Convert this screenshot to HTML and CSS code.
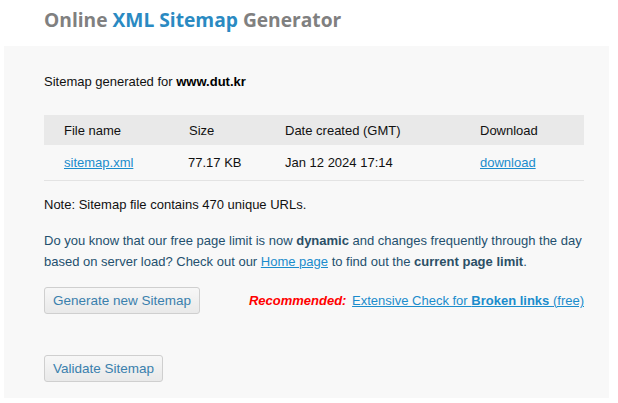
FILE: index.html
```html
<!DOCTYPE html>
<html lang="en">
<head>
    <meta charset="UTF-8">
    <title>Online XML Sitemap Generator</title>
    <link rel="stylesheet" href="styles.css">
</head>
<body>
    <h1 class="page-title">Online <span class="accent">XML Sitemap</span> Generator</h1>

    <div class="panel">
        <p class="generated">Sitemap generated for <strong>www.dut.kr</strong></p>

        <table class="files">
            <thead>
                <tr>
                    <th class="col-name">File name</th>
                    <th class="col-size">Size</th>
                    <th class="col-date">Date created (GMT)</th>
                    <th>Download</th>
                </tr>
            </thead>
            <tbody>
                <tr>
                    <td><a href="#">sitemap.xml</a></td>
                    <td>77.17 KB</td>
                    <td>Jan 12 2024 17:14</td>
                    <td><a href="#">download</a></td>
                </tr>
            </tbody>
        </table>

        <p class="note">Note: Sitemap file contains 470 unique URLs.</p>

        <p class="info">Do you know that our free page limit is now <strong>dynamic</strong> and changes frequently through the day based on server load? Check out our <a href="#">Home page</a> to find out the <strong>current page limit</strong>.</p>

        <div class="actions">
            <button class="btn">Generate new Sitemap</button>
            <div class="promo">
                <em>Recommended:</em>
                <a href="#">Extensive Check for <strong>Broken links </strong>(free)</a>
            </div>
        </div>

        <div class="actions validate">
            <button class="btn">Validate Sitemap</button>
        </div>
    </div>
</body>
</html>
```

FILE: styles.css
```css
* {
    margin: 0;
    padding: 0;
    box-sizing: border-box;
}

body {
    font-family: 'Liberation Sans', Arial, sans-serif;
    font-size: 13px;
    color: #111;
    background: #fff;
}

a {
    color: #1b8ccc;
}

.page-title {
    font-family: 'Open Sans', sans-serif;
    font-size: 19.2px;
    font-weight: 700;
    color: #808080;
    line-height: 28px;
    padding: 6px 0 0 44px;
    height: 46px;
}

.page-title .accent {
    color: #2a8ac2;
}

.panel {
    background: #f8f8f8;
    margin: 0 9px 0 4px;
    padding: 27px 25px 16px 40px;
}

.generated {
    line-height: 18px;
}

.generated strong {
    color: #000;
}

.files {
    width: 100%;
    margin-top: 24px;
    border-collapse: collapse;
}

.files th {
    background: #e9e9e9;
    font-weight: normal;
    color: #111;
    text-align: left;
    height: 30px;
    padding: 0 0 0 20px;
}

.files td {
    height: 35px;
    padding: 0 0 0 20px;
    border-bottom: 1px solid #e3e3e3;
}

.files .col-name {
    width: 125px;
}

.files .col-size {
    width: 96px;
}

.files .col-date {
    width: 195px;
}

.files td:nth-child(2) {
    padding-left: 19px;
}

.note {
    margin-top: 15px;
    line-height: 18px;
}

.info {
    margin-top: 16px;
    line-height: 21px;
    color: #24506e;
}

.info strong {
    color: #2b4f66;
}

.actions {
    display: flex;
    justify-content: space-between;
    align-items: center;
    margin-top: 15px;
}

.actions.validate {
    margin-top: 41px;
}

.btn {
    font-family: 'Liberation Sans', Arial, sans-serif;
    font-size: 13.5px;
    color: #3a80ad;
    height: 27px;
    padding: 0 8px;
    border: 1px solid #cfcfcf;
    border-radius: 3px;
    background: linear-gradient(#f7f7f7, #e9e9e9);
}

.promo {
    font-size: 13px;
}

.promo em {
    color: #f00;
    font-weight: bold;
    margin-right: 2px;
}
```
